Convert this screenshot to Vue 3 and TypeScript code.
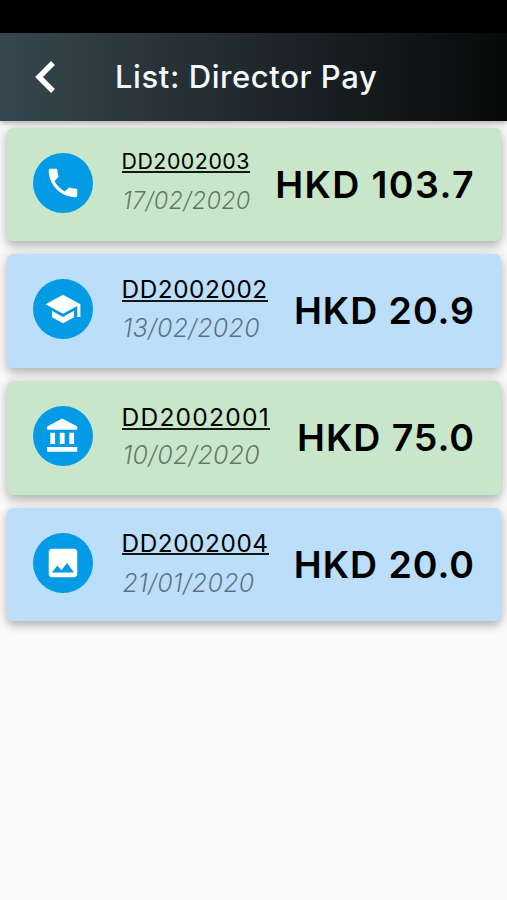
<script setup lang="ts">
interface Payment {
  code: string
  date: string
  amount: string
  icon: string
  tone: 'green' | 'blue'
  size: string
}

const icons: Record<string, string> = {
  phone: 'M20 15.5c-1.25 0-2.45-.2-3.57-.57-.35-.11-.74-.03-1.02.24l-2.2 2.2c-2.83-1.44-5.15-3.75-6.59-6.59l2.2-2.21c.28-.26.36-.65.25-1C8.7 6.45 8.5 5.25 8.5 4c0-.55-.45-1-1-1H4c-.55 0-1 .45-1 1 0 9.39 7.61 17 17 17 .55 0 1-.45 1-1v-3.5c0-.55-.45-1-1-1z',
  school: 'M5 13.18v4L12 21l7-3.82v-4L12 17l-7-3.82zM12 3L1 9l11 6 9-4.91V17h2V9L12 3z',
  bank: 'M4 10v7h3v-7H4zm6 0v7h3v-7h-3zM2 22h19v-3H2v3zm14-12v7h3v-7h-3zm-4.5-9L2 6v2h19V6l-9.5-5z',
  image: 'M21 19V5c0-1.1-.9-2-2-2H5c-1.1 0-2 .9-2 2v14c0 1.1.9 2 2 2h14c1.1 0 2-.9 2-2zM8.5 13.5l2.5 3.01L14.5 12l4.500 6H5l3.500-4.500z',
}

const payments: Payment[] = [
  { code: 'DD2002003', date: '17/02/2020', amount: 'HKD 103.7', icon: 'phone', tone: 'green', size: 'compact' },
  { code: 'DD2002002', date: '13/02/2020', amount: 'HKD 20.9', icon: 'school', tone: 'blue', size: 'regular' },
  { code: 'DD2002001', date: '10/02/2020', amount: 'HKD 75.0', icon: 'bank', tone: 'green', size: 'wide' },
  { code: 'DD2002004', date: '21/01/2020', amount: 'HKD 20.0', icon: 'image', tone: 'blue', size: 'last' },
]
</script>

<template>
  <div class="screen">
    <div class="status-bar"></div>
    <header class="app-bar">
      <svg class="back" viewBox="0 0 20 32"><path d="M18 2 4 16l14 14" /></svg>
      <h1 class="title">List: Director Pay</h1>
    </header>
    <main class="list">
      <article v-for="p in payments" :key="p.code" class="card" :class="[p.tone, p.size]">
        <span class="avatar">
          <svg viewBox="0 0 24 24"><path :d="icons[p.icon]" /></svg>
        </span>
        <div class="details">
          <div class="code"><span>{{ p.code }}</span></div>
          <div class="date">{{ p.date }}</div>
        </div>
        <div class="amount">{{ p.amount }}</div>
      </article>
    </main>
  </div>
</template>

<style>
body {
  background: #fafafa;
}
</style>

<style scoped>
.screen {
  width: 507px;
  height: 900px;
  overflow: hidden;
  background: #fafafa;
  font-family: Inter, Roboto, sans-serif;
  white-space: nowrap;
}
.status-bar {
  height: 33px;
  background: #000;
}
.app-bar {
  position: relative;
  z-index: 1;
  box-sizing: border-box;
  height: 88px;
  padding-left: 35px;
  display: flex;
  align-items: center;
  background: linear-gradient(90deg, #37474f, #080909);
  box-shadow: 0 2px 5px rgba(0, 0, 0, 0.3);
}
.back {
  width: 20px;
  height: 32px;
  margin-right: 60px;
  fill: none;
  stroke: #fff;
  stroke-width: 5.4;
}
.title {
  margin: 0;
  font-size: 31px;
  font-weight: 500;
  line-height: 40px;
  letter-spacing: 0.58px;
  color: #f5f9fb;
}
.list {
  display: flex;
  flex-direction: column;
  gap: 13px;
  padding: 6.7px 6px 0 7px;
}
.card {
  box-sizing: border-box;
  height: 113.67px;
  padding: 25px 27px 0 25.5px;
  display: flex;
  align-items: flex-start;
  border-radius: 6px;
  box-shadow: 0 5px 8px rgba(0, 0, 0, 0.2), 0 1px 14px rgba(0, 0, 0, 0.14);
}
.green {
  background: #c8e6c9;
}
.blue {
  background: #bbdefb;
}
.avatar {
  flex: none;
  width: 60px;
  height: 60px;
  margin-right: 29px;
  display: flex;
  align-items: center;
  justify-content: center;
  border-radius: 50%;
  background: #039be5;
}
.avatar svg {
  width: 38px;
  height: 38px;
  fill: #fff;
}
.details {
  flex: none;
}
.code {
  height: 39px;
  font-size: 24.3px;
  line-height: 20px;
  letter-spacing: 0.6px;
  color: #000;
}
.code span {
  display: inline-block;
  padding-bottom: 1px;
  border-bottom: 2px solid #141914;
}
.date {
  padding-left: 1px;
  font-size: 25px;
  font-weight: 300;
  font-style: italic;
  line-height: 20px;
  letter-spacing: 0.25px;
  color: rgba(0, 0, 0, 0.5);
}
.compact .details {
  margin-top: -2px;
}
.compact .code {
  height: 40px;
  font-size: 21.3px;
  letter-spacing: 0.55px;
}
.compact .code span {
  padding-bottom: 0;
}
.compact .date {
  font-size: 23.5px;
}
.wide .details {
  margin-top: 1px;
}
.wide .code {
  height: 38px;
  font-size: 24.6px;
  letter-spacing: 1.2px;
}
.last .code {
  height: 40px;
}
.last .code span {
  padding-bottom: 0;
}
.amount {
  margin-left: auto;
  margin-right: -1px;
  padding-top: 12px;
  font-size: 37.5px;
  font-weight: 600;
  line-height: 40px;
  letter-spacing: 0.95px;
  color: #000;
}
.compact .amount {
  letter-spacing: 1.4px;
}
</style>
